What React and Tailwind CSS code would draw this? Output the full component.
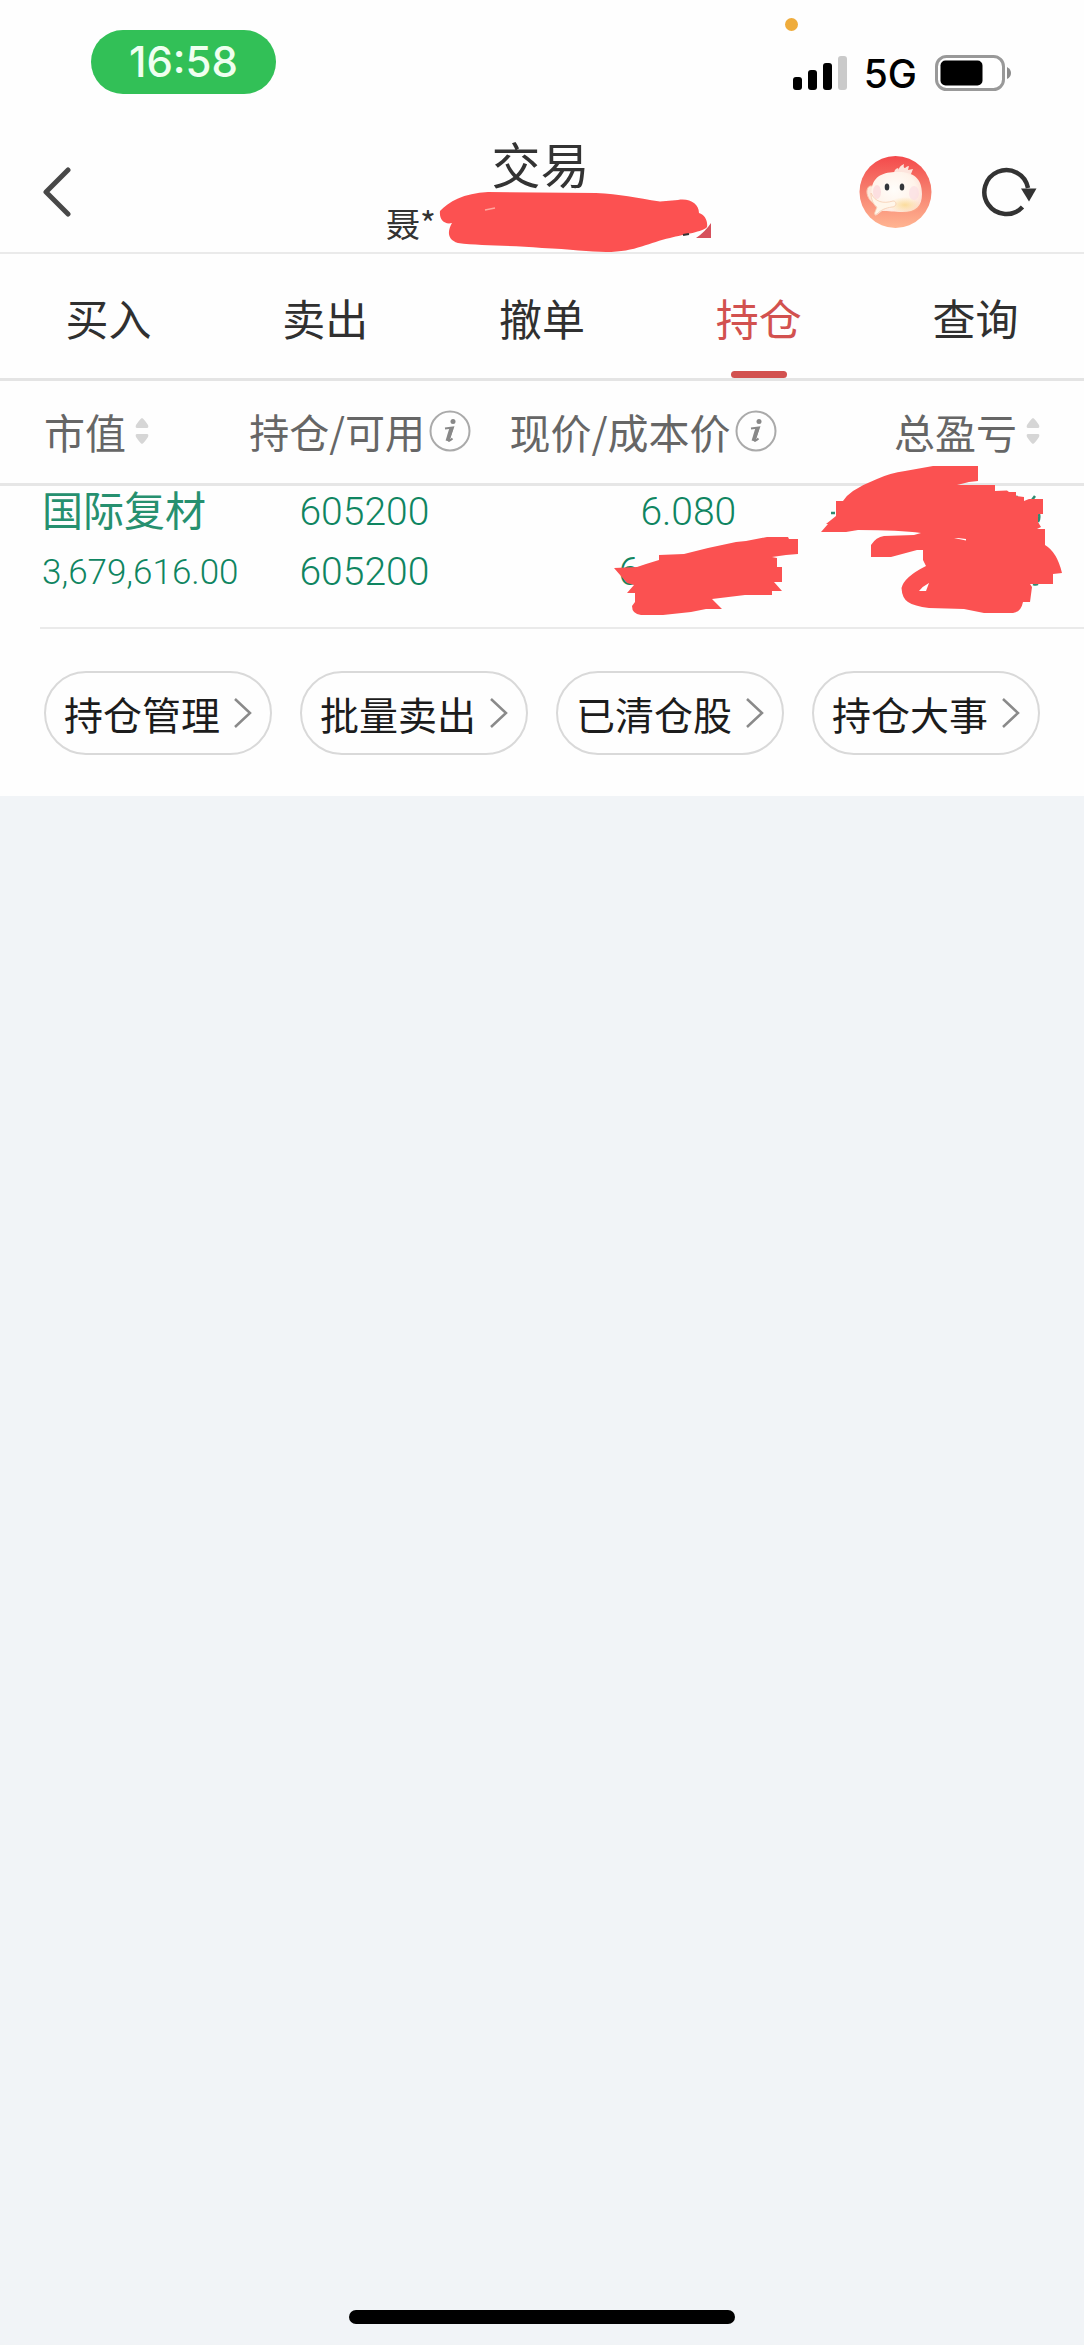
const TABS = ["买入", "卖出", "撤单", "持仓", "查询"];
const ACTIONS = ["持仓管理", "批量卖出", "已清仓股", "持仓大事"];

function StatusBar() {
  return (
    <div className="relative flex h-24 items-start justify-between pt-[30px] pr-[72px] pl-[91px]">
      <time className="flex h-16 w-[185px] items-center justify-center rounded-full bg-[#32c057] font-[Inter] text-[42px] leading-none font-medium text-[#effff0]">
        16:58
      </time>
      <span className="absolute top-[18px] right-[286px] size-[13px] rounded-full bg-[#efac3c]" />
      <div className="flex items-center pt-6">
        <svg className="h-[34px] w-[54px]" viewBox="0 0 54 34" aria-label="信号">
          <rect x="0" y="21" width="9" height="13" rx="3" />
          <rect x="15" y="14" width="9" height="20" rx="3" />
          <rect x="30" y="7" width="9" height="27" rx="3" />
          <rect x="45" y="0" width="9" height="34" rx="3" fill="#cacaca" />
        </svg>
        <span className="ml-[17px] pt-[3px] font-[Inter] text-[39px] leading-[34px] font-medium text-black">5G</span>
        <svg className="ml-[18px] h-9 w-[77px]" viewBox="0 0 77 36" aria-label="电量">
          <rect x="1.5" y="1.5" width="67" height="33" rx="10" fill="#fff" stroke="#999" strokeWidth="3" />
          <rect x="5.500" y="5.500" width="42" height="25" rx="5" />
          <path d="M72 12q4 2 4 6t-4 6z" fill="#8c8c8c" />
        </svg>
      </div>
    </div>
  );
}

function Mascot() {
  return (
    <svg className="h-[74px] w-[73px]" viewBox="0 0 73 74" aria-hidden="true">
      <defs>
        <linearGradient id="disc" x1="0" y1="0" x2="0" y2="1">
          <stop offset="0" stopColor="#f4494b" />
          <stop offset=".45" stopColor="#f67c6c" />
          <stop offset="1" stopColor="#ffb592" />
        </linearGradient>
        <radialGradient id="face" cx=".45" cy=".4" r=".65">
          <stop offset="0" stopColor="#fffdfa" />
          <stop offset=".65" stopColor="#fff3ea" />
          <stop offset="1" stopColor="#fdd9cf" />
        </radialGradient>
        <radialGradient id="glow">
          <stop offset="0" stopColor="#fbdc9c" />
          <stop offset="1" stopColor="#fbdc9c" stopOpacity="0" />
        </radialGradient>
      </defs>
      <circle cx="36.500" cy="37" r="36" fill="url(#disc)" />
      <path d="M35 19q0-5 4-6 1 1 0 3 1-5 6-7-1 4 1 4 2-2 4-2l-1 4 5-1-2 5z" fill="#fde4dc" />
      <path d="M11 31c-5 2-4 12 3 17l5-3-5-14z" fill="#fde9dc" stroke="#f9c4ac" />
      <path d="M13 32c3-13 14-15 27-15 14 0 23 6 23 22 0 12-6 18-20 18-8 0-13-1-20-1l-5 4c-2 1-3 0-2-2l2-5c-6-6-7-12-5-21z" fill="url(#face)" />
      <ellipse cx="46" cy="50" rx="16" ry="8" fill="url(#glow)" />
      <ellipse cx="18" cy="37" rx="4" ry="7" fill="#fbd9dc" opacity=".8" />
      <ellipse cx="55" cy="38" rx="5" ry="7" fill="#fbdde2" opacity=".7" />
      <path d="M12 38c4 9 12 11 22 8 4 0 4 6-1 6-7 1-11 3-15 7-2 1-3 0-2-2l2-5c-4-3-6-8-6-14z" fill="#fff6ea" stroke="#f5cdb0" strokeWidth=".8" />
      <ellipse cx="28" cy="32" rx="2.300" ry="3.500" fill="#33363a" />
      <ellipse cx="43" cy="32" rx="2.300" ry="3.500" fill="#33363a" />
    </svg>
  );
}

function NameScribble() {
  return (
    <svg className="absolute -top-[15px] left-[53px] h-[62px] w-[273px]" viewBox="439 192 273 62" aria-hidden="true">
      <path
        fill="#fc5151"
        d="M440 212C448 203 464 194 488 193L596 194C620 195 636 199 660 202.500L678 201C690 199 699 205 699 214C705 216 708 222 707 228C703 233 685 235 670 239C650 243 636 253 606 253C590 253 570 250 542 249C510 246 480 247 458 244C446 240 448 231 452 224C444 226 439 220 440 212Z"
      />
      <path fill="#d6515c" d="M711 224V239H696Q705 233 711 224Z" />
      <path stroke="#ffa79f" strokeWidth="1.500" d="M485 211l10-2" />
      <path stroke="#333" strokeWidth="2" d="M683 236l6-1" />
    </svg>
  );
}

function CostScribble() {
  return (
    <svg className="absolute top-[50px] left-[104px] h-[80px] w-[186px]" viewBox="613 536 186 80" aria-hidden="true">
      <path
        fill="#fb5151"
        d="M614 568L637 567L646 564L659 560V555L684 554L708 548L736 542L746 541L767 537H788L789 539H798V554L786 555L772 557L777 558V567H782V582H774L782 591H772V595H745L712 599L722 609H706L691 612L663 615H641Q632 614 632 606L635 602V593H627L634 585L627 583Z"
      />
    </svg>
  );
}

function ProfitScribble() {
  return (
    <svg className="absolute -top-[21px] right-[22px] h-[149px] w-[242px]" viewBox="820 465 242 149" aria-hidden="true">
      <g fill="none" stroke="#2f8b70" strokeWidth="2.500">
        <path d="M831 513h4M1016 496l4 6M1035 496l-3 4M1039 514q1 4-1 8M1033 584q3 1 5 0" />
      </g>
      <path
        fill="#fb5151"
        fillRule="evenodd"
        d="M821 532L828 524L826 524L836 516V501H843Q847 495 853 491Q864 484 877 479Q890 473 905 471L933 466H978V481L969 482L957 485H995V491L1007 490.500L1009 492H1016V496L1024 497V501L1029 499H1043V514H1038V522L1041 527L1037 529H1045V545Q1057 552 1062 573L1053 574V584H1030L1032 587L1030 602H1023Q1021 612 1013 613H984L964 609L929 608Q914 606 908 602Q902 598 901.500 588Q904 577 926 566L923 560V550H917L891 557H871V545Q876 537 884 536L914 535L921 533Q900 530 858 530L846 532ZM919 591H926L929 583Q923 586 919 591ZM954 538L966 540.500V539L958 538Z"
      />
    </svg>
  );
}

function Header() {
  return (
    <header className="flex h-[158px] items-start justify-between border-b-2 border-[#eaeaea] px-[43px]">
      <button type="button" aria-label="返回" className="mt-[71px] flex flex-1">
        <svg className="h-[50px] w-7" viewBox="0 0 28 50" fill="none" stroke="#484848" strokeWidth="5" strokeLinecap="round" strokeLinejoin="round">
          <path d="M25 3L3 25l22 22" />
        </svg>
      </button>
      <div className="flex w-[309px] flex-col items-center pt-[43px]">
        <h1 className="text-[49px] leading-[48px] text-[#333]">交易</h1>
        <p className="relative mt-[19px] w-full text-[34px] leading-[34px] text-[#333]">
          聂*
          <NameScribble />
        </p>
      </div>
      <div className="flex flex-1 items-center justify-end gap-[50px] pt-[59px] pr-[3px]">
        <button type="button" aria-label="助手">
          <Mascot />
        </button>
        <button type="button" aria-label="刷新">
          <svg className="h-[50px] w-14" viewBox="0 0 56 50" fill="none">
            <path d="M40.500 40A22 22 0 1 1 46 21" stroke="#333" strokeWidth="4.500" />
            <path d="M39 21.500h15.500l-7.500 13z" fill="#333" />
          </svg>
        </button>
      </div>
    </header>
  );
}

function Tabs() {
  return (
    <nav className="grid grid-cols-5 border-b-[3px] border-[#e4e4e4]">
      {TABS.map((t) => (
        <button
          key={t}
          type="button"
          aria-current={t === "持仓" ? "page" : undefined}
          className="group flex flex-col items-center pt-[41px] text-[43px] leading-[44px] text-[#303030] aria-[current=page]:text-[#d2514f]"
        >
          {t}
          <span className="mt-8 h-[7px] w-14 rounded group-aria-[current=page]:bg-[#d2514f]" />
        </button>
      ))}
    </nav>
  );
}

function SortMark() {
  return (
    <svg className="h-[26px] w-[14px]" viewBox="0 0 14 26" fill="#d6d6d6" aria-hidden="true">
      <path d="M7 0q2 1 6 7 1 3-1 3H2q-2 0-1-3 4-6 6-7zM7 26q-2-1-6-7-1-3 1-3h10q2 0 1 3-4 6-6 7z" />
    </svg>
  );
}

function InfoMark() {
  return (
    <svg className="size-[42px]" viewBox="0 0 42 42" aria-hidden="true">
      <circle cx="21" cy="21" r="19.500" fill="none" stroke="#aaa" strokeWidth="2" />
      <circle cx="24" cy="11.500" r="2.500" fill="#888" />
      <path d="M16 18.500l8-1-4.500 12.500q0 2 4-1.500" fill="none" stroke="#888" strokeWidth="2" />
      <path d="M22.500 18l-4 13" stroke="#888" strokeWidth="4" />
    </svg>
  );
}

function Holdings() {
  const head = "flex items-center leading-[40px] text-[#666]";
  return (
    <table className="w-full table-fixed border-collapse">
      <thead>
        <tr className="h-[103px] border-b-[3px] border-[#e6e6e6]">
          <th className="w-[23%] pb-[2px] pl-11 font-normal">
            <button type="button" className={head + " gap-[9px] text-[41px]"}>
              市值
              <SortMark />
            </button>
          </th>
          <th className="w-[24%] pb-[2px] font-normal">
            <button type="button" className={head + " gap-1 text-[40px]"}>
              持仓/可用
              <InfoMark />
            </button>
          </th>
          <th className="w-[33%] pb-[2px] font-normal">
            <button type="button" className={head + " gap-1 text-[41px]"}>
              现价/成本价
              <InfoMark />
            </button>
          </th>
          <th className="w-[20%] pr-11 pb-[2px] font-normal">
            <button type="button" className={head + " ml-auto gap-[9px] text-[41px]"}>
              总盈亏
              <SortMark />
            </button>
          </th>
        </tr>
      </thead>
      <tbody>
        <tr className="h-[143px] align-top text-center font-[Roboto,'Noto_Sans_CJK_SC',sans-serif] text-[39px] leading-[60px] font-light whitespace-nowrap text-[#0f8561]">
          <td className="pl-[42px] text-left">
            <div className="font-['Noto_Sans_CJK_SC',sans-serif] text-[41px] leading-[44px] font-normal text-[#26906f]">国际复材</div>
            <div className="mt-[13px] text-[35px]">3,679,616.00</div>
          </td>
          <td className="pr-[30px]">
            <div className="leading-[52px]">605200</div>
            <div className="mt-1">605200</div>
          </td>
          <td className="relative">
            <div className="leading-[52px]">6.080</div>
            <div className="mt-1 pl-[109px] text-left">6</div>
            <CostScribble />
          </td>
          <td className="relative">
            <ProfitScribble />
          </td>
        </tr>
      </tbody>
    </table>
  );
}

function Actions() {
  return (
    <div className="ml-10 border-t-2 border-[#eaeaea]">
      <div className="grid grid-cols-4 gap-7 pt-[42px] pr-11 pb-[41px] pl-1">
        {ACTIONS.map((a) => (
          <button
            key={a}
            type="button"
            className="flex h-[84px] items-center justify-center gap-[14px] rounded-full border-2 border-[#d9d9d9] text-[39px] leading-[39px] whitespace-nowrap text-[#1c1c1c]"
          >
            {a}
            <svg className="h-[30px] w-[18px]" viewBox="0 0 18 30" fill="none" stroke="#8a8a8a" strokeWidth="2.500" aria-hidden="true">
              <path d="M1 1l15 14L1 29" />
            </svg>
          </button>
        ))}
      </div>
    </div>
  );
}

export default function App() {
  return (
    <div className="flex min-h-screen flex-col bg-[#f1f4f7] font-['Noto_Sans_CJK_SC',sans-serif]">
      <main className="bg-[#fefefe]">
        <StatusBar />
        <Header />
        <Tabs />
        <Holdings />
        <Actions />
      </main>
      <div className="mx-auto mt-auto mb-[21px] h-[14px] w-[386px] rounded-full bg-black" />
    </div>
  );
}
